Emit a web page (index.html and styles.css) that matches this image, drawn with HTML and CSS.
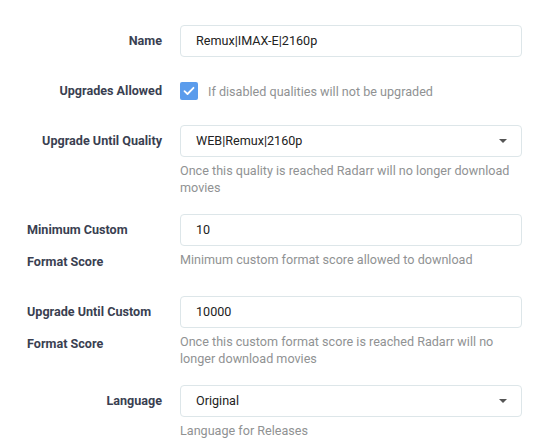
FILE: index.html
```html
<!DOCTYPE html>
<html>
<head>
<meta charset="utf-8">
<link rel="stylesheet" href="styles.css">
</head>
<body>
<form class="form">
  <div class="group">
    <label class="label"><span>Name</span></label>
    <div class="field">
      <div class="input">Remux|IMAX-E|2160p</div>
    </div>
  </div>
  <div class="group">
    <label class="label"><span>Upgrades Allowed</span></label>
    <div class="field check-field">
      <span class="checkbox">
        <svg width="12" height="10" viewBox="0 0 12 10"><path d="M1.5 5.2 L4.5 8 L10.5 1.8" fill="none" stroke="#fff" stroke-width="1.8" stroke-linecap="round" stroke-linejoin="round"/></svg>
      </span>
      <span class="check-text">If disabled qualities will not be upgraded</span>
    </div>
  </div>
  <div class="group">
    <label class="label"><span>Upgrade Until Quality</span></label>
    <div class="field">
      <div class="input select">WEB|Remux|2160p<span class="caret"></span></div>
      <div class="help">Once this quality is reached Radarr will no longer download movies</div>
    </div>
  </div>
  <div class="group">
    <label class="label"><span>Minimum Custom Format Score</span></label>
    <div class="field">
      <div class="input">10</div>
      <div class="help">Minimum custom format score allowed to download</div>
    </div>
  </div>
  <div class="group">
    <label class="label"><span>Upgrade Until Custom Format Score</span></label>
    <div class="field">
      <div class="input">10000</div>
      <div class="help">Once this custom format score is reached Radarr will no longer download movies</div>
    </div>
  </div>
  <div class="group">
    <label class="label"><span>Language</span></label>
    <div class="field">
      <div class="input select">Original<span class="caret"></span></div>
      <div class="help">Language for Releases</div>
    </div>
  </div>
</form>
</body>
</html>
```
FILE: styles.css
```css
body {
  margin: 8px;
  background: #fff;
  font-family: Roboto, "Liberation Sans", sans-serif;
  font-size: 12.6px;
  color: #515253;
}
.form {
  padding: 17px 13px 0 19px;
}
.group {
  display: flex;
  margin-bottom: 18px;
}
.label {
  flex: 0 0 135px;
  margin-right: 18px;
  display: flex;
  justify-content: flex-end;
  font-weight: bold;
  line-height: 32px;
  color: #3a3f51;
}
.field {
  flex: 1 1 auto;
  min-width: 0;
}
.input {
  box-sizing: border-box;
  height: 32px;
  padding: 0 15px;
  border: 1px solid #dde6e9;
  border-radius: 4px;
  line-height: 30px;
  color: #222;
  position: relative;
}
.caret {
  position: absolute;
  right: 14px;
  top: 13px;
  width: 0;
  height: 0;
  border-left: 4px solid transparent;
  border-right: 4px solid transparent;
  border-top: 4px solid #555;
}
.help {
  margin-top: 5px;
  line-height: 17px;
  color: #909293;
}
.check-field {
  display: flex;
  align-items: center;
  height: 32px;
}
.checkbox {
  box-sizing: border-box;
  width: 18px;
  height: 18px;
  border-radius: 2px;
  background: #5b9cec;
  display: flex;
  align-items: center;
  justify-content: center;
}
.check-text {
  margin-left: 10px;
  color: #909293;
}
```
